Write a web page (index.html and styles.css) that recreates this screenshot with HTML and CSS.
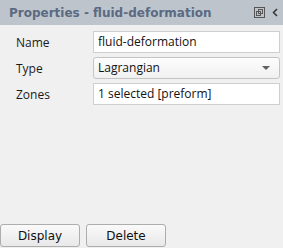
FILE: index.html
```html
<!DOCTYPE html>
<html lang="en">
<head>
  <meta charset="UTF-8">
  <title>Properties - fluid-deformation</title>
  <link rel="stylesheet" href="styles.css">
</head>
<body>
  <div class="panel">
    <header class="panel-head">
      <h1>Properties - fluid-deformation</h1>
      <div class="head-icons">
        <svg width="11" height="11" viewBox="0 0 11 11">
          <rect x="0.5" y="0.5" width="10" height="10" fill="none" stroke="#555"/>
          <rect x="4.5" y="2.5" width="4" height="4" fill="none" stroke="#555"/>
          <rect x="2.5" y="4.5" width="4" height="4" fill="none" stroke="#555"/>
        </svg>
        <svg width="6" height="9" viewBox="0 0 6 9">
          <path d="M5 1 L1.5 4.5 L5 8" fill="none" stroke="#333" stroke-width="1.5"/>
        </svg>
      </div>
    </header>

    <form class="props">
      <label>Name</label>
      <div class="field">fluid-deformation</div>
      <label>Type</label>
      <div class="field select">Lagrangian <span class="caret"></span></div>
      <label>Zones</label>
      <div class="field">1 selected [preform]</div>
    </form>

    <div class="actions">
      <button type="button" class="btn">Display</button>
      <button type="button" class="btn">Delete</button>
    </div>
  </div>
</body>
</html>
```

FILE: styles.css
```css
body {
  margin: 0;
  background: #f0f0f0;
  font-family: 'Open Sans', sans-serif;
}
.panel {
  height: 248px;
  display: flex;
  flex-direction: column;
}
.panel-head {
  height: 25px;
  background: #bec4cc;
  display: flex;
  align-items: center;
  padding: 0 5px 0 9px;
}
.panel-head h1 {
  flex: 1;
  margin: 0;
  font-family: 'DejaVu Sans', sans-serif;
  font-size: 12px;
  font-weight: bold;
  color: #5b6a82;
}
.head-icons {
  display: flex;
  align-items: center;
  gap: 7px;
}
.props {
  display: grid;
  grid-template-columns: 77px 187px;
  column-gap: 0;
  row-gap: 4px;
  padding: 6px 0 0 16px;
  align-items: center;
}
.props label {
  font-size: 12px;
  color: #1a1a1a;
}
.field {
  height: 20px;
  line-height: 20px;
  border: 1px solid #cfcfcf;
  background: #fff;
  padding: 0 4px;
  font-size: 12px;
  color: #111;
}
.select {
  position: relative;
  border-radius: 3px;
  background: linear-gradient(#fdfdfd, #f0f0f0);
  border-color: #c4c4c4;
}
.caret {
  position: absolute;
  right: 9px;
  top: 8px;
  border-left: 4px solid transparent;
  border-right: 4px solid transparent;
  border-top: 4px solid #606060;
}
.actions {
  margin-top: auto;
  display: flex;
  gap: 6px;
  padding-bottom: 1px;
}
.btn {
  width: 80px;
  height: 23px;
  border: 1px solid #adadad;
  border-radius: 3px;
  background: linear-gradient(#fafafa, #e8e8e8);
  font-family: 'DejaVu Sans', sans-serif;
  font-size: 12px;
  color: #111;
}
```
